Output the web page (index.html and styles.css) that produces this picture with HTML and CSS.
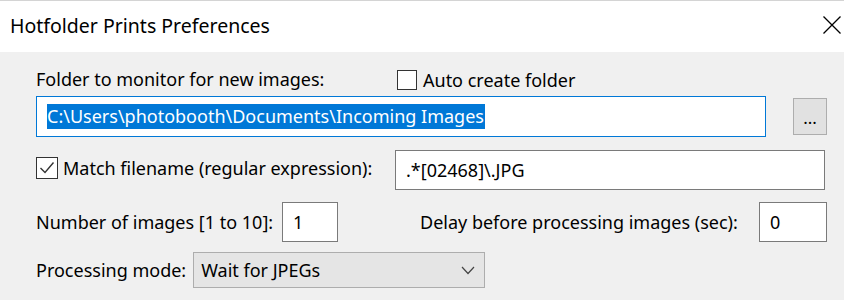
FILE: index.html
```html
<!DOCTYPE html>
<html lang="en">
<head>
    <meta charset="UTF-8">
    <title>Hotfolder Prints Preferences</title>
    <link rel="stylesheet" href="styles.css">
</head>
<body>

    <div class="title-bar">
        <div class="title">Hotfolder Prints Preferences</div>
        <svg class="close" width="20" height="20" viewBox="0 0 20 20">
            <path d="M1.5 1.5 L18.5 18.5 M18.5 1.5 L1.5 18.5" stroke="#000" stroke-width="1.3" fill="none"/>
        </svg>
    </div>

    <div class="dialog">
        <div class="row row-folder">
            <div class="folder-label">Folder to monitor for new images:</div>
            <div class="check">
                <span class="box"></span>
                <span>Auto create folder</span>
            </div>
        </div>

        <div class="row row-path">
            <div class="field path-field focused"><span class="selected">C:\Users\photobooth\Documents\Incoming Images</span></div>
            <div class="browse">...</div>
        </div>

        <div class="row row-match">
            <div class="check match-check">
                <span class="box">
                    <svg width="20" height="20" viewBox="0 0 20 20">
                        <path d="M3.5 10 L8 14.5 L16.5 4.5" stroke="#333" stroke-width="1.4" fill="none"/>
                    </svg>
                </span>
                <span>Match filename (regular expression):</span>
            </div>
            <div class="field regex-field">.*[02468]\.JPG</div>
        </div>

        <div class="row row-numbers">
            <div class="label count-label">Number of images [1 to 10]:</div>
            <div class="field count-field">1</div>
            <div class="label delay-label">Delay before processing images (sec):</div>
            <div class="field delay-field">0</div>
        </div>

        <div class="row row-mode">
            <div class="label">Processing mode:</div>
            <div class="select">
                <span>Wait for JPEGs</span>
                <svg width="14" height="9" viewBox="0 0 14 9">
                    <path d="M1 1 L7 7.5 L13 1" stroke="#444" stroke-width="1.2" fill="none"/>
                </svg>
            </div>
        </div>
    </div>

</body>
</html>
```
FILE: styles.css
```css
body {
    margin: 0;
    font-family: "Noto Sans", sans-serif;
    font-size: 18px;
    color: #000;
    background-color: #f0f0f0;
    height: 300px;
    overflow: hidden;
}

.title-bar {
    height: 51px;
    border-top: 1px solid #d4d4d4;
    background-color: #fff;
    display: flex;
    align-items: center;
    justify-content: space-between;
    padding: 0 2px 0 10px;
}

.title {
    font-size: 19.5px;
    margin-top: -2px;
}

.close {
    margin-top: -3px;
}

.dialog {
    padding: 17px 0 0 36px;
}

.row {
    display: flex;
    align-items: center;
}

.row-folder {
    height: 21px;
}

.folder-label {
    width: 361px;
    margin-top: -2px;
}

.check {
    display: flex;
    align-items: center;
    gap: 6px;
}

.box {
    width: 20px;
    height: 20px;
    box-sizing: border-box;
    border: 1px solid #333;
    background-color: #fff;
    display: flex;
}

.box svg {
    margin: -1px;
}

.row-path {
    margin-top: 6px;
    height: 41px;
}

.field {
    box-sizing: border-box;
    height: 40px;
    border: 1px solid #7a7a7a;
    background-color: #fff;
    display: flex;
    align-items: center;
    padding-left: 10px;
}

.path-field {
    width: 730px;
    height: 41px;
    border-color: #0078d7;
    padding-left: 10px;
}

.selected {
    background-color: #0078d7;
    color: #fff;
    line-height: 25px;
    padding-right: 1px;
}

.browse {
    margin-left: 27px;
    width: 34px;
    height: 37px;
    box-sizing: border-box;
    border: 1px solid #adadad;
    background-color: #e1e1e1;
    text-align: center;
    line-height: 38px;
    font-size: 17px;
}

.row-match {
    margin-top: 13px;
}

.match-check {
    width: 359px;
    gap: 5px;
    margin-top: -4px;
}

.match-check .box {
    width: 22px;
    height: 22px;
}

.match-check .box svg {
    margin: 0;
}

.regex-field {
    width: 430px;
}

.row-numbers {
    margin-top: 12px;
}

.count-label {
    width: 246px;
}

.count-field {
    width: 56px;
}

.delay-label {
    width: 339px;
    margin-left: 82px;
}

.delay-field {
    width: 68px;
}

.row-mode {
    margin-top: 10px;
}

.select {
    margin-left: 7px;
    width: 292px;
    height: 36px;
    box-sizing: border-box;
    border: 1px solid #adadad;
    background-color: #e5e5e5;
    display: flex;
    align-items: center;
    justify-content: space-between;
    padding: 0 9px 0 7px;
}
```
